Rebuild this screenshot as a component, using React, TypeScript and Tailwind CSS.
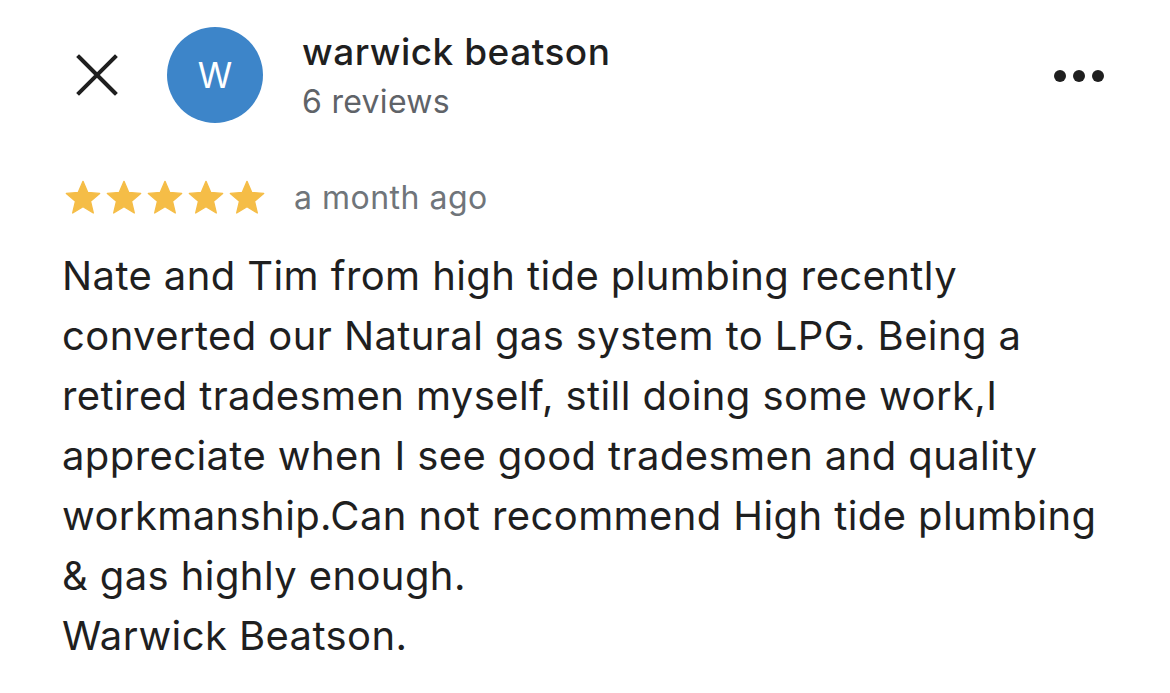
const lines = [
  "Nate and Tim from high tide plumbing recently",
  "converted our Natural gas system to LPG. Being a",
  "retired tradesmen myself, still doing some work,I",
  "appreciate when I see good tradesmen and quality",
  "workmanship.Can not recommend High tide plumbing",
  "& gas highly enough.",
  "Warwick Beatson.",
]

function Star() {
  return (
    <svg
      viewBox="0 0 24 24"
      className="w-[40px] h-[40px] mx-[0.5px]"
      fill="#f5bd47"
      stroke="#f5bd47"
      strokeWidth={0.8}
      strokeLinejoin="round"
    >
      <path d="M12 17.27L18.18 21l-1.64-7.03L22 9.24l-7.19-.61L12 2 9.19 8.63 2 9.24l5.46 4.73L5.82 21z" />
    </svg>
  )
}

export default function App() {
  return (
    <div className="w-[1170px] h-[693px] bg-white overflow-hidden font-['Inter',sans-serif] text-[#1f1f1f]">
      {/* Header */}
      <div className="flex items-start pt-[27px] pl-[76px] pr-[66px]">
        <button className="w-[42px] h-[96px] flex items-center justify-center">
          <svg viewBox="0 0 42 42" className="w-[42px] h-[42px]" stroke="#1f1f1f" strokeWidth={4} strokeLinecap="square">
            <path d="M3 3L39 39M39 3L3 39" />
          </svg>
        </button>
        <div className="ml-[49px] w-[96px] h-[96px] rounded-full bg-[#3d85c9] flex items-center justify-center text-white text-[35px]">
          W
        </div>
        <div className="ml-[39px] flex-1">
          <div className="text-[37px] leading-[50px] font-medium tracking-[0.5px]">warwick beatson</div>
          <div className="text-[32px] leading-[50px] text-[#5f6368] tracking-[0.3px]">6 reviews</div>
        </div>
        <div className="flex gap-[7px] mt-[43px]">
          <span className="w-[12px] h-[12px] rounded-full bg-[#1f1f1f]" />
          <span className="w-[12px] h-[12px] rounded-full bg-[#1f1f1f]" />
          <span className="w-[12px] h-[12px] rounded-full bg-[#1f1f1f]" />
        </div>
      </div>

      {/* Rating */}
      <div className="flex items-start pl-[62px] mt-[51px]">
        <div className="flex">
          <Star />
          <Star />
          <Star />
          <Star />
          <Star />
        </div>
        <span className="ml-[27px] text-[32px] leading-[40px] text-[#70757a] tracking-[0.5px]">a month ago</span>
      </div>

      {/* Body */}
      <p className="pl-[62px] mt-[28px] text-[40px] leading-[60px] tracking-[0.4px]">
        {lines.map((l, i) => (
          <span key={i} className="block whitespace-nowrap">
            {l}
          </span>
        ))}
      </p>
    </div>
  )
}
